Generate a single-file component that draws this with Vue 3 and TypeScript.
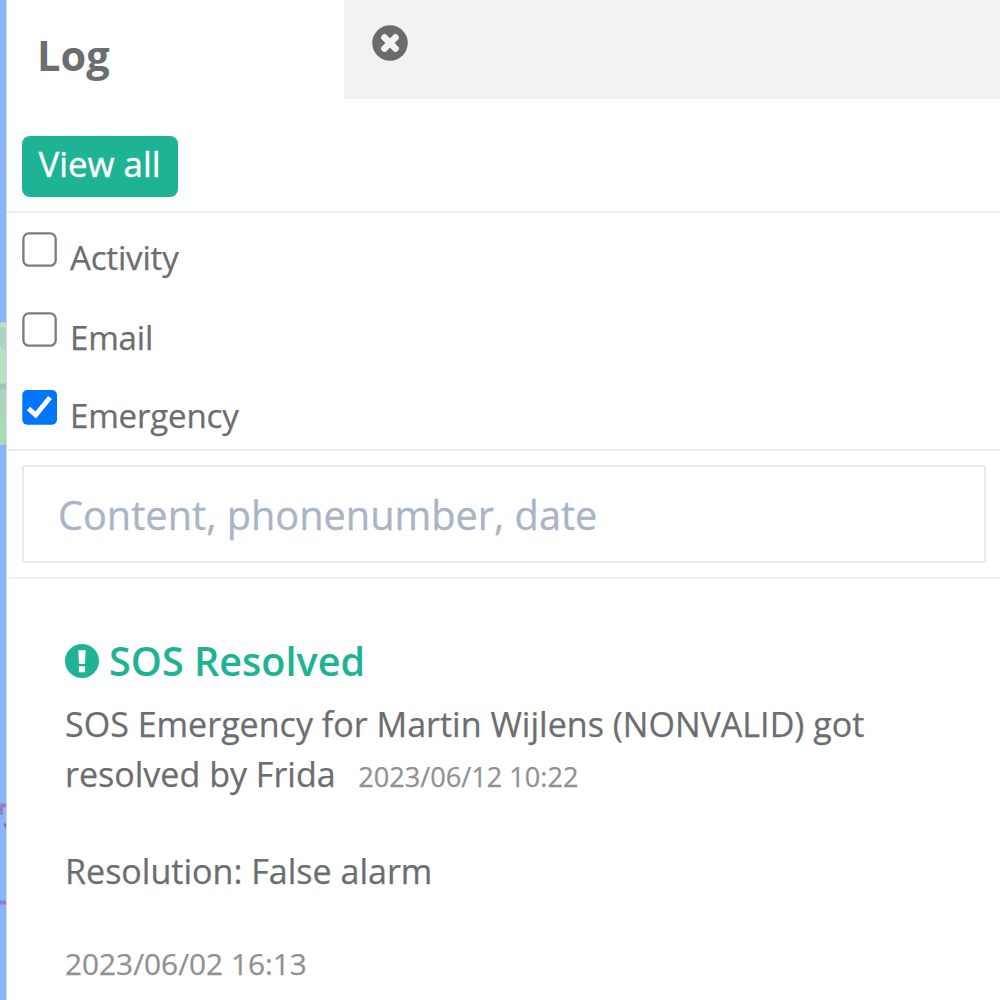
<script setup lang="ts">
import { ref } from 'vue'

interface Filter {
  id: string
  label: string
  checked: boolean
}

const filters = ref<Filter[]>([
  { id: 'activity', label: 'Activity', checked: false },
  { id: 'email', label: 'Email', checked: false },
  { id: 'emergency', label: 'Emergency', checked: true },
])

const query = ref('')
</script>

<template>
  <div class="page">
    <!-- Sliver of the map that stays visible beside the panel -->
    <svg class="map" width="7" height="1000" viewBox="0 0 7 1000" aria-hidden="true">
      <rect width="7" height="1000" fill="#8ab3f8" />
      <path d="M0 323 Q3 321 7 323 V445 H0Z" fill="#b9e2c5" />
      <path d="M0 327 Q4 326 7 330 V350 Q4 351 0 346Z" fill="#b0d3c0" />
      <path d="M0 383 Q4 384 7 382 V410 H0Z" fill="#b0d3bd" />
      <path d="M0 384 H7 V389 H0Z" fill="#a8c4b4" />
      <path d="M0 410 H7 V445 H0Z" fill="#a8dab5" />
      <path d="M0 805.500H7M1 807v8M0 902.500H7" fill="none" stroke="#8e84bd" stroke-width="4" />
      <path d="M3.500 823.500H7V832Z" fill="#7c5c9c" />
      <path d="M6.500 0V1000" stroke="#ccd8ec" stroke-width="1" />
    </svg>

    <main class="panel">
      <header class="tabs">
        <h1 class="tab">Log</h1>
        <div class="rest">
          <button class="close" aria-label="Close">
            <svg width="36" height="36" viewBox="0 0 36 36">
              <circle cx="18" cy="18" r="17.800" fill="#696b6d" />
              <path d="M12.500 12.500L23.500 23.500M23.500 12.500L12.500 23.500" stroke="#f3f3f4" stroke-width="6.600" stroke-linecap="round" />
              <path d="M12.800 12.800L23.200 23.200M23.200 12.800L12.800 23.200" stroke="#f3f3f4" stroke-width="5.600" stroke-linecap="square" />
            </svg>
          </button>
        </div>
      </header>

      <section class="toolbar">
        <button class="view-all">View all</button>
      </section>

      <section class="filters">
        <label v-for="f in filters" :key="f.id" class="filter" :class="f.id">
          <input v-model="f.checked" type="checkbox" class="native" />
          <svg class="box" width="35" height="35" viewBox="0 0 35 35">
            <template v-if="f.checked">
              <rect x="0.300" width="34.700" height="34.700" rx="5" fill="#0075ff" />
              <path d="M6.500 18.500L13.700 25L28 7.500" fill="none" stroke="#fff" stroke-width="5" />
            </template>
            <rect v-else x="1.400" y="1.400" width="32.300" height="32.300" rx="5.500" fill="#fff" stroke="#7c7c7c" stroke-width="2.300" />
          </svg>
          <span class="name">{{ f.label }}</span>
        </label>
      </section>

      <section class="search">
        <input v-model="query" class="field" type="text" placeholder="Content, phonenumber, date" />
      </section>

      <article class="entry">
        <h2 class="title">
          <svg width="34" height="34" viewBox="0 0 35 35">
            <circle cx="17.500" cy="17.500" r="17.500" fill="#1eb394" />
            <path d="M13.700 6.500H21.300L20.600 20.500H14.400Z M14.300 23H20.700V29H14.300Z" fill="#fff" />
          </svg>
          <span class="title-text">SOS Resolved</span>
        </h2>
        <p class="body">
          SOS Emergency for Martin Wijlens (NONVALID) got<br />
          resolved by Frida<small class="when">2023/06/12 10:22</small>
        </p>
        <p class="body resolution">Resolution: False alarm</p>
        <p class="stamp">2023/06/02 16:13</p>
      </article>
    </main>
  </div>
</template>

<style>
body {
  margin: 0;
  background: #fff;
}
</style>

<style scoped>
.page {
  display: flex;
  width: 1000px;
  height: 1000px;
  overflow: hidden;
  background: #fff;
  color: #6b6e70;
  font-family: "Open Sans", "Noto Sans", sans-serif;
  font-size: 34.050px;
  -webkit-text-stroke: 0.250px currentColor;
}

h1,
h2,
p {
  margin: 0;
}

button {
  border: 0;
  padding: 0;
  font-family: inherit;
}

svg {
  display: block;
  flex: none;
}

.panel {
  flex: 1;
  min-width: 0;
}

.tabs {
  display: flex;
  height: 99px;
}

.tab {
  box-sizing: border-box;
  width: 337px;
  padding: 25px 0 0 30px;
  font-size: 41.500px;
  font-weight: 700;
  line-height: 61px;
  -webkit-text-stroke: 0;
}

.rest {
  flex: 1;
  padding: 25px 0 0 28px;
  background: #f2f2f2;
}

.close {
  display: block;
  background: none;
}

.toolbar {
  box-sizing: border-box;
  height: 114px;
  padding: 37px 15px 0;
  border-bottom: 2px solid #ededee;
}

.view-all {
  display: block;
  width: 156px;
  height: 61px;
  border-radius: 8px;
  background: #1eb394;
  color: #fff;
  font-size: 34.800px;
  line-height: 56px;
  padding: 0 1px 5px 0;
  -webkit-text-stroke: 0.400px currentColor;
}

.filters {
  box-sizing: border-box;
  height: 238px;
  padding: 19px 15px 0;
  border-bottom: 2px solid #ededee;
}

.filter {
  display: flex;
  height: 80px;
}

.filter.email {
  height: 78px;
}

.native {
  position: absolute;
  opacity: 0;
}

.name {
  margin-left: 13px;
  padding-top: 3px;
  font-size: 33.100px;
  letter-spacing: -0.200px;
  line-height: 46px;
}

.search {
  box-sizing: border-box;
  height: 128px;
  padding: 14px 14px 0 15px;
  border-bottom: 2px solid #f0f0f1;
}

.field {
  box-sizing: border-box;
  display: block;
  width: 100%;
  height: 98px;
  border: 2px solid #ebebec;
  border-radius: 2px;
  padding: 2px 34px 0;
  color: #676a6c;
  font-family: inherit;
  font-size: 39.700px;
  outline: none;
}

.field::placeholder {
  color: #a9b4c7;
  opacity: 1;
  -webkit-text-stroke: 0.300px #a9b4c7;
}

.entry {
  padding: 57px 0 0 58px;
}

.title {
  display: flex;
  align-items: center;
  height: 50px;
  color: #1eb394;
  font-size: 39.600px;
  font-weight: 600;
  line-height: 50px;
  -webkit-text-stroke: 0;
}

.title-text {
  margin-left: 10px;
}

.body {
  padding-top: 13px;
  line-height: 50px;
  white-space: nowrap;
}

.when {
  margin-left: 22.500px;
  color: #8f9193;
  font-size: 27.150px;
}

.resolution {
  padding-top: 44px;
}

.stamp {
  padding-top: 43px;
  color: #8f9193;
  font-size: 29.800px;
  line-height: 50px;
}
</style>
